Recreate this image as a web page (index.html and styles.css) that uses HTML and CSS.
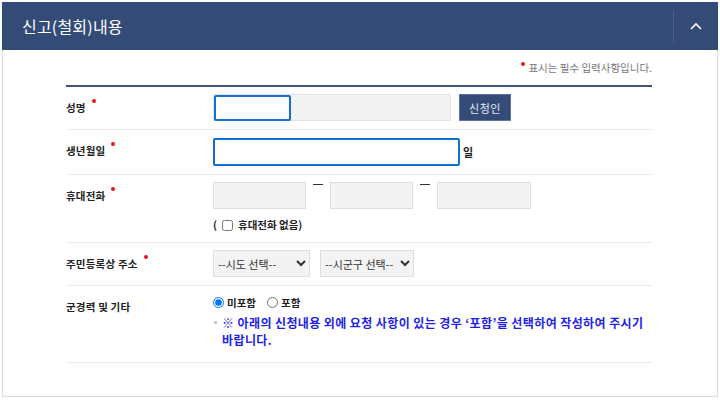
FILE: index.html
```html
<!DOCTYPE html>
<html>
<head>
<meta charset="utf-8">
<title>신고(철회)내용</title>
<link rel="stylesheet" href="styles.css">
</head>
<body>

<div class="panel">
  <div class="panel-head">
    <h2 class="panel-title">신고(철회)내용</h2>
    <a class="panel-toggle">
      <svg width="14" height="10" viewBox="0 0 14 10">
        <polyline points="2,8 7,3 12,8" fill="none" stroke="#ffffff" stroke-width="1.6"/>
      </svg>
    </a>
  </div>

  <div class="panel-body">
    <p class="req-note"><span class="req-dot"></span>표시는 필수 입력사항입니다.</p>

    <div class="form-table">

      <div class="form-row">
        <div class="form-label">성명<span class="req-dot"></span></div>
        <div class="form-field">
          <div class="line">
            <div class="name-wrap">
              <input class="name-input" type="text">
            </div>
            <button class="btn-dark" type="button">신청인</button>
          </div>
        </div>
      </div>

      <div class="form-row">
        <div class="form-label">생년월일<span class="req-dot"></span></div>
        <div class="form-field">
          <div class="line">
            <input class="birth-input" type="text">
            <span class="unit">일</span>
          </div>
        </div>
      </div>

      <div class="form-row">
        <div class="form-label">휴대전화<span class="req-dot"></span></div>
        <div class="form-field">
          <div class="line phone-line">
            <input class="gray-input phone-1" type="text">
            <span class="dash"></span>
            <input class="gray-input phone-2" type="text">
            <span class="dash"></span>
            <input class="gray-input phone-3" type="text">
          </div>
          <label class="no-phone">( <input type="checkbox"> 휴대전화 없음)</label>
        </div>
      </div>

      <div class="form-row">
        <div class="form-label">주민등록상 주소<span class="req-dot"></span></div>
        <div class="form-field">
          <div class="line">
            <select class="gray-select sel-sido">
              <option>--시도 선택--</option>
            </select>
            <select class="gray-select sel-sigungu">
              <option>--시군구 선택--</option>
            </select>
          </div>
        </div>
      </div>

      <div class="form-row">
        <div class="form-label">군경력 및 기타</div>
        <div class="form-field">
          <div class="radio-line">
            <label class="radio"><input type="radio" name="etc" checked> 미포함</label>
            <label class="radio"><input type="radio" name="etc"> 포함</label>
          </div>
          <p class="notice">※ 아래의 신청내용 외에 요청 사항이 있는 경우 ‘포함’을 선택하여 작성하여 주시기 바랍니다.</p>
        </div>
      </div>

    </div>
  </div>
</div>

</body>
</html>
```

FILE: styles.css
```css
body {
  margin: 0;
  font-family: "Noto Sans CJK KR", "Noto Sans", sans-serif;
  background-color: white;
  color: #222;
}

.panel {
  margin: 2px 2px 0 2px;
}

.panel-head {
  height: 48px;
  background-color: #344b78;
  display: flex;
  align-items: center;
}

.panel-title {
  flex: 1;
  margin: 0;
  padding-left: 20px;
  font-size: 16px;
  font-weight: normal;
  color: white;
  letter-spacing: 0.2px;
}

.panel-toggle {
  width: 44px;
  height: 33px;
  border-left: 1px solid #4b5f88;
  display: flex;
  align-items: center;
  justify-content: center;
}

.panel-body {
  border: 1px solid #dcdcdc;
  border-top: 0;
  padding: 8px 65px 33px 63px;
}

.req-note {
  margin: 0 0 7px 0;
  height: 20px;
  line-height: 20px;
  text-align: right;
  font-size: 10.5px;
  color: #777;
}

.req-dot {
  display: inline-block;
  width: 4px;
  height: 4px;
  border-radius: 50%;
  background-color: #e8141c;
  vertical-align: 9px;
  margin: 0 3px 0 6px;
}

.req-note .req-dot {
  margin: 0 3px 0 0;
  vertical-align: 6px;
}

.form-table {
  border-top: 2px solid #3f5278;
}

.form-row {
  display: flex;
  border-bottom: 1px solid #ececec;
}

.form-label {
  width: 147px;
  flex-shrink: 0;
  padding: 8px 0 7px 0;
  line-height: 26px;
  font-size: 10.5px;
  font-weight: bold;
  letter-spacing: 0.2px;
  color: #222;
}

.form-field {
  flex: 1;
  padding: 7px 0 8px 0;
}

.line {
  display: flex;
  align-items: center;
}

input,
select,
button {
  font-family: inherit;
  box-sizing: border-box;
  margin: 0;
}

.name-wrap {
  width: 238px;
  height: 27px;
  box-sizing: border-box;
  border: 1px solid #e2e2e2;
  background-color: #f3f3f3;
  display: flex;
  align-items: center;
}

.name-input {
  width: 77px;
  height: 26px;
  border: 2px solid #1270d3;
  border-radius: 2px;
  background: white;
  outline: none;
}

.btn-dark {
  margin-left: 8px;
  width: 52px;
  height: 27px;
  background-color: #344b78;
  border: 1px solid #6074a0;
  color: #e4e8f0;
  font-size: 11px;
  letter-spacing: 0.5px;
}

.birth-input {
  margin-top: 1px;
  width: 247px;
  height: 28px;
  border: 2px solid #1270d3;
  border-radius: 2px;
  outline: none;
}

.unit {
  margin-left: 3px;
  font-size: 11px;
  font-weight: bold;
}

.phone-line {
  align-items: flex-start;
}

.gray-input {
  height: 27px;
  border: 1px solid #dedede;
  background-color: #f3f3f3;
}

.phone-1 { width: 93px; }
.phone-2 { width: 83px; }
.phone-3 { width: 94px; }

.dash {
  width: 10px;
  margin: 2px 7px 0 7px;
  border-top: 1px solid #333;
}

.no-phone {
  display: flex;
  align-items: center;
  gap: 4px;
  margin-top: 7px;
  line-height: 18px;
  font-size: 10.5px;
  font-weight: bold;
}

.no-phone input {
  width: 11px;
  height: 11px;
  margin: 0 1px;
}

.gray-select {
  height: 27px;
  border: 1px solid #dedede;
  background-color: #f3f3f3;
  font-size: 11px;
  color: #333;
  padding: 0;
}

.sel-sido { width: 97px; }
.sel-sigungu { width: 94px; margin-left: 10px; }

.radio-line {
  display: flex;
  gap: 11px;
  margin-top: 1px;
  line-height: 17px;
  font-size: 10.5px;
  font-weight: bold;
}

.radio {
  display: flex;
  align-items: center;
  gap: 3px;
}

.radio input {
  width: 11px;
  height: 11px;
  margin: 0;
}

.notice {
  position: relative;
  margin: 3px 0 6px 0;
  padding-left: 9px;
  width: 430px;
  line-height: 17px;
  font-size: 12px;
  font-weight: bold;
  letter-spacing: 0.4px;
  color: #1e1ee6;
}

.notice::before {
  content: "";
  position: absolute;
  left: 1px;
  top: 7px;
  width: 3px;
  height: 3px;
  background-color: #c8c8c8;
}
```
